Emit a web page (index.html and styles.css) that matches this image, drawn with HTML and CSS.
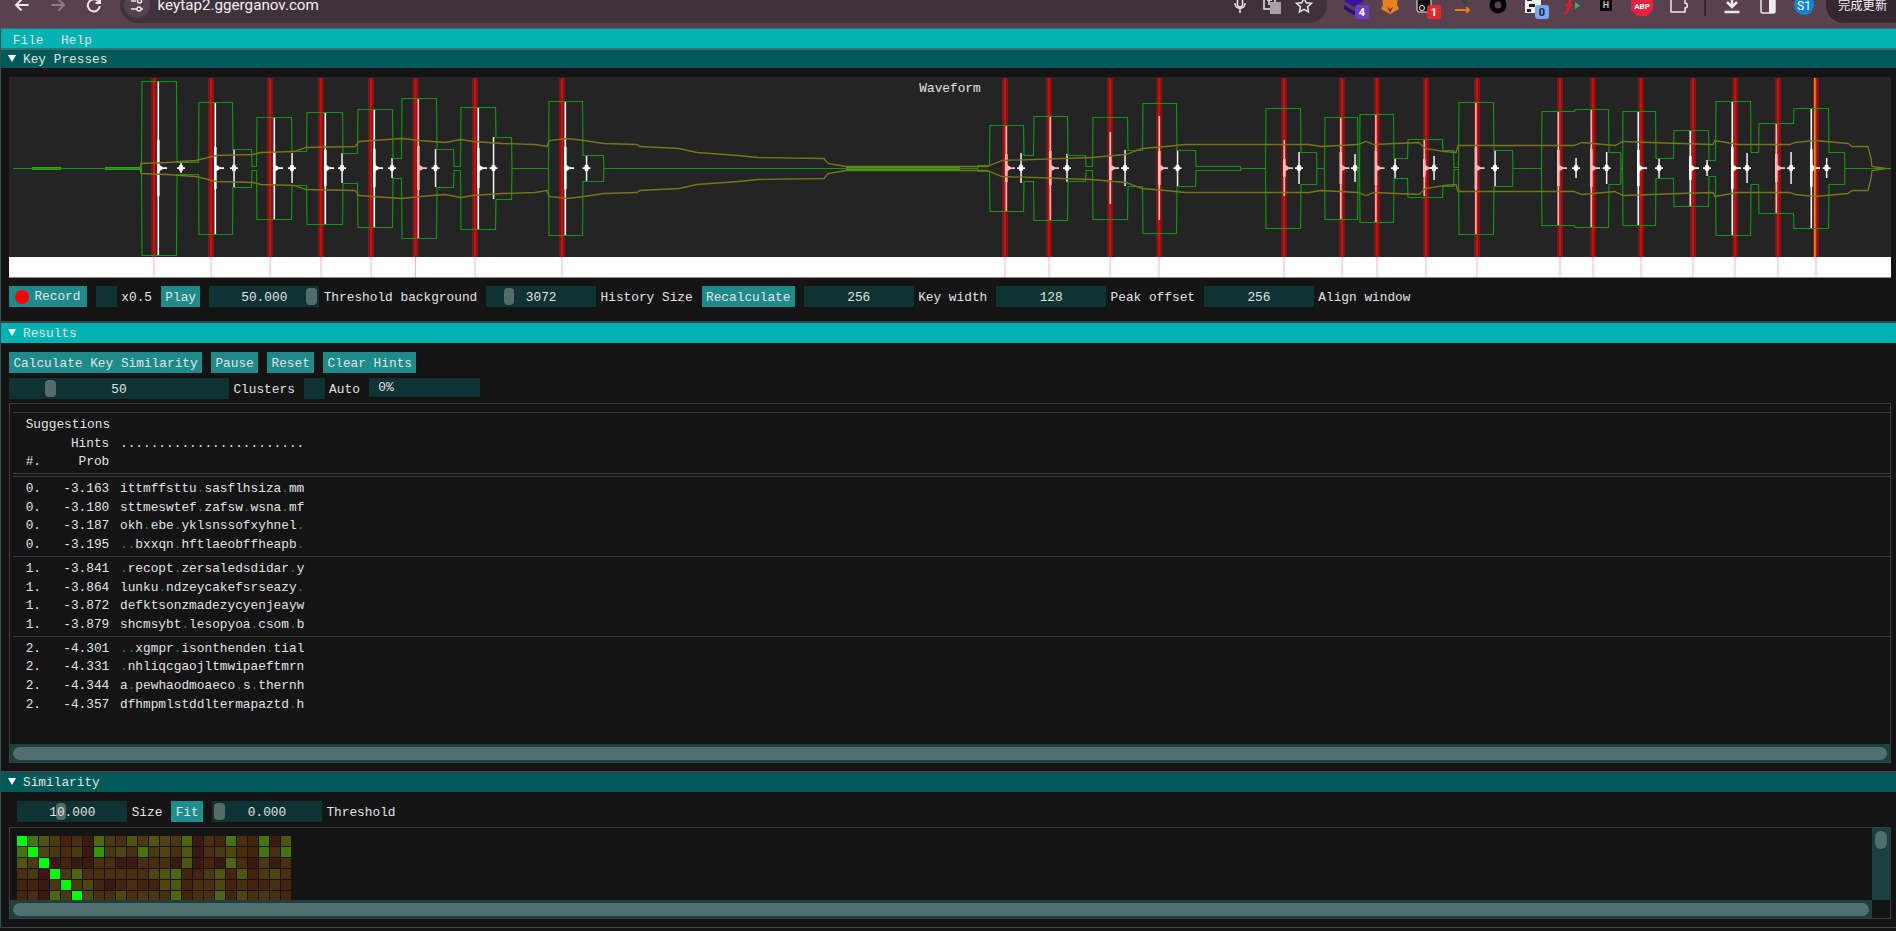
FILE: index.html
```html
<!DOCTYPE html>
<html>
<head>
  <title>keytap2</title>
  <link rel="stylesheet" href="styles.css">
</head>
<body>

  <!-- Browser toolbar -->
  <div class="toolbar">
    <div class="toolbar-row">
      <div class="slot first">
        <svg viewBox="0 0 36 36"><path d="M24.5 18H12M17.5 12.5L12 18l5.5 5.5" class="ic"/></svg>
      </div>
      <div class="slot">
        <svg viewBox="0 0 36 36"><path d="M11.5 18H24M18.5 12.5L24 18l-5.5 5.5" class="ic dim"/></svg>
      </div>
      <div class="slot">
        <svg viewBox="0 0 36 36"><path d="M22.8 15A6 6 0 1 0 23.8 19" class="ic"/><path d="M24 11.5V16h-4.5" class="ic"/></svg>
      </div>
      <div class="urlbar">
        <div class="site-icon">
          <svg viewBox="0 0 26 26"><path d="M7 9h5M7 17h6M17 17h2" class="ic thin"/><circle cx="15.5" cy="9" r="2" class="ic thin"/><circle cx="15" cy="17" r="2" class="ic thin"/></svg>
        </div>
        <span class="url">keytap2.ggerganov.com</span>
        <div class="spacer"></div>
        <div class="url-slot">
          <svg viewBox="0 0 32 36"><rect x="13.5" y="10" width="5" height="10" rx="2.5" class="ic thin"/><path d="M11 16c0 7 10 7 10 0M16 22v4" class="ic thin"/></svg>
        </div>
        <div class="url-slot">
          <svg viewBox="0 0 32 36"><rect x="8" y="10" width="11" height="12" class="ic thin"/><rect x="14" y="15" width="11" height="12" fill="#a9a0a6"/><path d="M11 13h5M13 13v5" class="ic thin"/></svg>
        </div>
        <div class="url-slot">
          <svg viewBox="0 0 32 36"><path d="M16 11l2.2 4.7 5.3.6-3.9 3.5 1 5.2-4.6-2.6-4.6 2.6 1-5.2-3.9-3.5 5.3-.6z" class="ic thin"/></svg>
        </div>
      </div>

      <!-- Extensions -->
      <div class="slot">
        <svg viewBox="0 0 36 36"><path d="M8 14l10-6 10 6-10 6z" fill="#3b10a3"/><path d="M8 18l10 6 10-6v4l-10 6-10-6z" fill="#2c0b80"/><rect x="19" y="18" width="14" height="14" rx="3" fill="#6a3fc5"/><text x="26" y="29" class="badge">4</text></svg>
      </div>
      <div class="slot">
        <svg viewBox="0 0 36 36"><path d="M10 9l5 4h6l5-4-1 9 2 4-9 5-9-5 2-4z" fill="#e8821e"/><path d="M15 20l3 2 3-2-3 6z" fill="#6e3a12"/></svg>
      </div>
      <div class="slot">
        <svg viewBox="0 0 36 36"><rect x="9" y="8" width="14" height="17" rx="2" fill="#111" stroke="#eee"/><circle cx="14" cy="21" r="2.5" fill="none" stroke="#eee"/><rect x="19" y="18" width="14" height="14" rx="3" fill="#e5282f"/><text x="26" y="29" class="badge">1</text></svg>
      </div>
      <div class="slot">
        <svg viewBox="0 0 36 36"><path d="M14 8l8 8v6" fill="none" stroke="#38434a" stroke-width="3"/><path d="M11 23h14M22 20l3 3-3 3" fill="none" stroke="#ee7d0e" stroke-width="2"/></svg>
      </div>
      <div class="slot">
        <svg viewBox="0 0 36 36"><circle cx="18" cy="18" r="6" fill="none" stroke="#000" stroke-width="5"/></svg>
      </div>
      <div class="slot">
        <svg viewBox="0 0 36 36"><rect x="9" y="7" width="16" height="19" fill="#eee"/><path d="M11 10h5v4h-5zM18 9h4v3h-4zM13 17h6v3h-6zM11 22h4v3h-4z" fill="#222"/><rect x="19" y="18" width="14" height="14" rx="3" fill="#7ba7ee"/><text x="26" y="29" class="badge dark">0</text></svg>
      </div>
      <div class="slot">
        <svg viewBox="0 0 36 36"><path d="M12 26c4 0 4-3 5-8s2-8 6-8M13 18h8" fill="none" stroke="#d2232a" stroke-width="2.6"/><path d="M23 15l5 3.5-5 3.5z" fill="#35b36a"/></svg>
      </div>
      <div class="slot">
        <svg viewBox="0 0 36 36"><rect x="12" y="11" width="12" height="13" rx="1" fill="#080808"/><text x="18" y="21" class="badge small">H</text></svg>
      </div>
      <div class="slot">
        <svg viewBox="0 0 36 36"><path d="M13 8h10l6 6v9l-6 6H13l-6-6v-9z" fill="#e6203f"/><text x="18" y="22" class="badge tiny">ABP</text></svg>
      </div>
      <div class="slot">
        <svg viewBox="0 0 36 36"><path d="M11 12h5c0-3 5-3 5 0h4v4c3 0 3 5 0 5v4H11z" class="ic thin"/></svg>
      </div>
      <div class="divider"></div>
      <div class="slot">
        <svg viewBox="0 0 36 36"><path d="M18 8v11M13 15l5 5 5-5M10.5 25h15" class="ic bold"/></svg>
      </div>
      <div class="slot">
        <svg viewBox="0 0 36 36"><rect x="11" y="10" width="14" height="16" rx="1.5" class="ic thin"/><rect x="19" y="10" width="6" height="16" fill="#eee"/></svg>
      </div>
      <div class="slot">
        <svg viewBox="0 0 36 36"><circle cx="18" cy="18" r="10" fill="#0e86d4"/><text x="18" y="22.5" class="badge avatar">S1</text></svg>
      </div>
      <div class="update">完成更新</div>
    </div>
  </div>

  <div class="app">
    <div class="menu">
      <span class="menu-item">File</span>
      <span class="menu-item">Help</span>
    </div>

    <!-- Key Presses -->
    <div class="header inactive"><span class="arrow"></span>Key Presses</div>
    <div class="panel keys">
      <div class="plot">
        <svg id="wave" class="wave" viewBox="9 77 1882 201" width="1882" height="201"></svg>
        <span class="plot-title">Waveform</span>
      </div>
      <div class="row controls">
        <div class="btn record"><span class="dot"></span>Record</div>
        <div class="field"><div class="check"></div><span>x0.5</span></div>
        <div class="btn">Play</div>
        <div class="field">
          <div class="slider"><span class="grab" style="left: 97px"></span><span class="val">50.000</span></div>
          <span>Threshold background</span>
        </div>
        <div class="field">
          <div class="slider"><span class="grab thin" style="left: 18px"></span><span class="val">3072</span></div>
          <span>History Size</span>
        </div>
        <div class="btn">Recalculate</div>
        <div class="field"><div class="slider"><span class="val">256</span></div><span>Key width</span></div>
        <div class="field"><div class="slider"><span class="val">128</span></div><span>Peak offset</span></div>
        <div class="field"><div class="slider"><span class="val">256</span></div><span>Align window</span></div>
      </div>
    </div>

    <!-- Results -->
    <div class="header active"><span class="arrow"></span>Results</div>
    <div class="panel results">
      <div class="row">
        <div class="btn">Calculate Key Similarity</div>
        <div class="btn">Pause</div>
        <div class="btn">Reset</div>
        <div class="btn">Clear Hints</div>
      </div>
      <div class="row second">
        <div class="field">
          <div class="slider wide"><span class="grab" style="left: 36px"></span><span class="val">50</span></div>
          <span>Clusters</span>
        </div>
        <div class="field"><div class="check"></div><span>Auto</span></div>
        <div class="progress">0%</div>
      </div>
      <div class="table-box">
        <div class="table-body" id="suggestions">
          <div class="rule first-rule"></div>
          <div class="head-row"><span>Suggestions</span></div>
          <div class="line"><span class="prob">Hints</span><span>........................</span></div>
          <div class="line"><span class="prob"><i>#.</i>Prob</span></div>
          <div class="rule double"></div>
        </div>
        <div class="hscroll"><span class="scroll-grab"></span></div>
      </div>
    </div>

    <!-- Similarity -->
    <div class="header inactive"><span class="arrow"></span>Similarity</div>
    <div class="panel similarity">
      <div class="row indent">
        <div class="field">
          <div class="slider"><span class="grab thin" style="left: 39px"></span><span class="val">10.000</span></div>
          <span>Size</span>
        </div>
        <div class="btn fit">Fit</div>
        <div class="field">
          <div class="slider"><span class="grab" style="left: 2px"></span><span class="val">0.000</span></div>
          <span>Threshold</span>
        </div>
      </div>
      <div class="heat-box">
        <div class="heat-view"><div class="heat" id="heat"></div></div>
        <div class="vscroll"><span class="vscroll-grab"></span></div>
        <div class="hscroll short"><span class="scroll-grab"></span></div>
        <div class="corner"></div>
      </div>
    </div>
  </div>

  <script src="script.js"></script>
</body>
</html>
```

FILE: styles.css
```css
html, body {
  margin: 0;
  height: 931px;
  overflow: hidden;
  background: #141414;
  font-family: "Liberation Mono", monospace;
  font-size: 12.8px;
  color: #e0e4e4;
}
svg {
  display: block;
}

/* browser toolbar */
.toolbar {
  height: 28px;
  background: #5a4150;
  overflow: hidden;
  font-family: Roboto, "Noto Sans CJK SC", sans-serif;
}
.toolbar-row {
  display: flex;
  align-items: center;
  height: 36px;
  margin-top: -13px;
}
.slot {
  width: 36px;
  height: 36px;
  flex: none;
}
.slot.first {
  margin-left: 4px;
}
.ic {
  fill: none;
  stroke: #eee6ea;
  stroke-width: 2;
}
.ic.dim {
  stroke: #8d7b87;
}
.ic.thin {
  stroke-width: 1.5;
}
.ic.bold {
  stroke-width: 2.5;
}
.badge {
  fill: #fff;
  font: bold 11px Roboto, sans-serif;
  text-anchor: middle;
}
.badge.dark {
  fill: #15233c;
}
.badge.small {
  fill: #bbb;
  font-size: 9px;
}
.badge.tiny {
  font-size: 8px;
}
.badge.avatar {
  font-weight: normal;
  font-size: 12px;
}
.urlbar {
  flex: none;
  width: 1207px;
  height: 36px;
  margin-left: 8px;
  margin-right: 8.5px;
  display: flex;
  align-items: center;
  background: #3f323c;
  border-radius: 18px;
  padding: 0 7px 0 4px;
  box-sizing: border-box;
}
.site-icon {
  width: 26px;
  height: 26px;
  border-radius: 50%;
  background: #54434f;
}
.url {
  margin-left: 7.5px;
  font-size: 15.2px;
  color: #f2eef0;
}
.spacer {
  flex: 1;
}
.url-slot {
  width: 32px;
  height: 36px;
}
.divider {
  width: 2px;
  height: 22px;
  margin: 0 8px;
  background: #33272f;
  flex: none;
}
.update {
  flex: 1;
  height: 36px;
  line-height: 38px;
  margin-left: 4.5px;
  padding-left: 12px;
  border-radius: 18px 0 0 18px;
  background: #332730;
  color: #f4f0f2;
  font-size: 12.3px;
}

/* imgui window */
.app {
  border-left: 1px solid #2e5050;
  border-top: 1px solid #3d6b6b;
}
.menu {
  display: flex;
  height: 19px;
  line-height: 23px;
  padding-left: 3px;
  background: #00b3b3;
  border-bottom: 2px solid #3a6e6e;
}
.menu-item {
  padding: 0 8.8px;
}
.header {
  display: flex;
  align-items: center;
  padding-left: 6.5px;
  box-sizing: border-box;
}
.header.inactive {
  background: #005a5a;
}
.header.active {
  background: #00b3b3;
}
.arrow {
  width: 0;
  height: 0;
  margin-right: 7.5px;
  margin-top: -2px;
  border-left: 4.5px solid transparent;
  border-right: 4.5px solid transparent;
  border-top: 7.5px solid #fff;
}
.panel {
  border-bottom: 2px solid #3c4545;
  box-sizing: border-box;
  padding-left: 8px;
}
.keys {
  height: 255px;
  padding-top: 9px;
}
.keys + .header {
  height: 20px;
}
.app > .header:nth-of-type(2) {
  height: 18px;
}
.results {
  height: 429.5px;
  padding-top: 9px;
}
.similarity {
  height: 136px;
  padding-top: 9px;
  border-bottom-width: 1px;
}
.results + .header {
  height: 19.5px;
}

/* waveform */
.plot {
  position: relative;
  width: 1882px;
  height: 201px;
}
.plot-title {
  position: absolute;
  top: 4px;
  left: 0;
  right: 0;
  text-align: center;
}

/* widgets */
.row {
  display: flex;
  gap: 8.9px;
  height: 21px;
  line-height: 23px;
  white-space: pre;
}
.controls {
  margin-top: 8px;
}
.second {
  margin-top: 5px;
}
.indent {
  margin-left: 8.3px;
}
.field {
  display: flex;
  gap: 4.4px;
}
.btn {
  padding: 0 4.4px;
  background: #1f8a8a;
  flex: none;
}
.btn.fit {
  background: #1b8f8f;
}
.record {
  display: flex;
  align-items: center;
  width: 78px;
  box-sizing: border-box;
}
.dot {
  width: 14px;
  height: 14px;
  margin: 0 5px 0 2px;
  border-radius: 50%;
  background: #ff0000;
}
.check {
  width: 21px;
  height: 21px;
  background: #0f3232;
}
.slider {
  position: relative;
  width: 110px;
  height: 21px;
  background: #0f3232;
  text-align: center;
}
.slider.wide {
  width: 220px;
}
.grab {
  position: absolute;
  top: 2px;
  width: 11px;
  height: 17px;
  border-radius: 4px;
  background: #566c6c;
}
.grab.thin {
  width: 10px;
}
.val {
  position: relative;
}
.progress {
  width: 111px;
  height: 19px;
  line-height: 20px;
  padding-left: 9.5px;
  box-sizing: border-box;
  background: #0f3232;
}

/* suggestions table */
.table-box {
  width: 1882px;
  height: 360px;
  margin-top: 4px;
  display: flex;
  flex-direction: column;
  box-sizing: border-box;
  border: 1px solid #3a3d3d;
}
.table-body {
  flex: 1;
  padding: 8px 0 0 3px;
}
.rule {
  height: 1px;
  background: #3a3d3d;
}
.first-rule {
  margin-bottom: 3px;
}
.rule.double {
  height: 1px;
  margin: 1px 0 6px;
  box-shadow: 0 3px 0 #3a3d3d;
}
.rule.group {
  margin: 1px 0 3px;
}
.head-row, .line {
  display: flex;
  height: 18.7px;
  line-height: 18.7px;
  padding-left: 12.7px;
  white-space: pre;
}
.prob {
  display: flex;
  justify-content: flex-end;
  width: 83.6px;
  margin-right: 10.7px;
  flex: none;
}
.prob i {
  font-style: normal;
  margin-right: auto;
}
.sp {
  color: #1d8f1d;
}
.hscroll {
  height: 18px;
  flex: none;
  padding: 3px 3px 2px 3px;
  box-sizing: border-box;
  background: #1a4040;
}
.scroll-grab {
  display: block;
  height: 13px;
  border-radius: 7px;
  background: #526e6e;
}

/* similarity heat map */
.heat-box {
  display: grid;
  grid-template-columns: 1fr 18px;
  grid-template-rows: 72px 18px;
  width: 1882px;
  height: 92px;
  margin-top: 5px;
  box-sizing: border-box;
  border: 1px solid #3a3d3d;
}
.heat-view {
  overflow: hidden;
  padding: 7.5px 0 0 7.3px;
  box-sizing: border-box;
}
.heat {
  display: grid;
  grid-template-columns: repeat(25, 10px);
  grid-auto-rows: 10px;
  gap: 1px;
}
.lv0 { background: #3a1a10; }
.lv1 { background: #45240f; }
.lv2 { background: #4a2e10; }
.lv3 { background: #4a3810; }
.lv4 { background: #4f4510; }
.lv5 { background: #4f5510; }
.lv6 { background: #4f6510; }
.lv7 { background: #45750c; }
.lv8 { background: #35950a; }
.lv9 { background: #00ff00; }
.vscroll {
  padding: 3px;
  box-sizing: border-box;
  background: #1a4040;
}
.vscroll-grab {
  display: block;
  height: 18px;
  border-radius: 6px;
  background: #526e6e;
}
.corner {
  background: #141414;
}
```

FILE: script.js
```js
const cy = 168;
const svgNs = 'http://www.w3.org/2000/svg';
const wave = document.getElementById('wave');

// red x, spike x, spike half height, release x, release half height
const keys = [
  [154, 158, 87, 181, 5], [211, 215, 66, 234, 19], [270, 274, 51, 292, 15], [321, 325, 56, 342, 15],
  [371, 374, 59, 392, 10], [415.5, 418, 70, 435.5, 19], [475, 478, 61, 493.5, 31], [562, 565, 67, 586.5, 13],
  [1005, 1006, 43, 1021, 15], [1049, 1050, 52, 1067, 14], [1110, 1110, 36, 1125, 18], [1159, 1159, 52, 1177.5, 18],
  [1284, 1284, 28, 1299, 16], [1342, 1340.5, 51, 1355, 14], [1377, 1375.6, 54, 1395, 10], [1426, 1424, 28, 1434, 12],
  [1477, 1475.6, 66, 1495, 18], [1560, 1558, 57, 1576, 10], [1593, 1591, 59, 1606.6, 16], [1641, 1638, 57, 1659, 10],
  [1693, 1690, 38, 1707, 8], [1735, 1732, 67, 1747, 15], [1778, 1776, 45, 1791, 16], [1816, 1811, 60, 1826.6, 10]
];

// step outline of each key window: x, half height from there on
const greenSteps = [
  [13, 0], [141, 87], [176, 6], [198, 66], [232, 19], [251, 2], [256, 51], [291, 17], [306, 56], [342, 15],
  [357, 59], [392, 10], [401, 70], [436, 19], [453, 2], [460, 61], [495, 31], [511, 0], [548, 67], [582, 13],
  [603, 0], [977, 3], [989, 43], [1023, 13], [1033, 52], [1067, 13], [1085, 2], [1092, 51], [1127, 18],
  [1142, 65], [1176, 18], [1195, 2], [1240, 0], [1265, 60], [1300, 16], [1316, 0], [1324, 51], [1357, 0],
  [1359, 54], [1393, 10], [1407, 29], [1442, 18], [1453, 1], [1458, 66], [1493, 18], [1512, 0], [1541, 57],
  [1574, 59], [1608, 16], [1620, 0], [1622, 57], [1655, 10], [1673, 38], [1708, 8], [1715, 67], [1750, 16],
  [1758, 45], [1793, 60], [1828, 16], [1844, 0], [1886, 0]
];

// slower envelope
const olive = [
  [140, 0], [141, 5], [167, 6], [196, 8], [216, 13], [253, 14], [261, 16], [294, 17], [306, 21], [355, 22],
  [359, 27], [402, 30], [420, 28], [445, 26], [461, 29], [473, 27], [502, 25], [535, 24], [547, 22], [549, 28],
  [567, 30], [584, 28], [604, 25], [637, 24], [640, 22], [679, 20], [697, 16], [738, 13], [758, 11], [824, 10],
  [828, 5], [846, 2], [987, 2], [1002, 8], [1091, 11], [1126, 14], [1142, 20], [1166, 22], [1185, 24], [1309, 24],
  [1321, 22], [1358, 24], [1366, 27], [1374, 24], [1419, 26], [1425, 20], [1444, 17], [1456, 16], [1458, 23],
  [1574, 23], [1582, 26], [1615, 23], [1623, 27], [1680, 25], [1713, 24], [1715, 28], [1738, 24], [1790, 24],
  [1795, 26], [1815, 28], [1848, 25], [1852, 22], [1868, 22], [1871, 10], [1872, 2], [1886, 0]
];

function add(tag, attrs) {
  const el = document.createElementNS(svgNs, tag);
  for (let k in attrs) el.setAttribute(k, attrs[k]);
  wave.appendChild(el);
  return el;
}

function bar(x, y, w, h, fill) {
  add('rect', { x: x, y: y, width: w, height: h, fill: fill });
}

function stepPath(sign) {
  let d = 'M' + greenSteps[0][0] + ' ' + (cy + 0.5);
  let prev = 0;
  greenSteps.forEach(s => {
    d += 'L' + (s[0] + 0.5) + ' ' + (cy + 0.5 + sign * prev) + 'L' + (s[0] + 1) + ' ' + (cy + 0.5 + sign * s[1]);
    prev = s[1];
  });
  return d;
}

function linePath(sign) {
  return 'M' + olive.map(p => p[0] + ' ' + (cy + 0.5 + sign * p[1])).join('L');
}

bar(9, 77, 1882, 180, '#242424');
bar(9, 257, 1882, 20, '#ffffff');
bar(9, 277, 1882, 1, '#8a8a8a');

// key markers
keys.forEach(k => {
  bar(k[0] - 3, 78, 6, 179, '#7e1616');
  bar(k[0] - 1, 78, 2, 179, '#c81010');
  bar(k[0] - 0.5, 257, 1, 20, '#ffb4b4');
});

// spikes
keys.forEach(k => {
  const onRed = Math.abs(k[1] - k[0]) < 3;
  const c = onRed ? '#ffb8b8' : '#ffffff';
  const body = Math.round(k[2] * 0.32);
  bar(k[1] - 0.5, cy - k[2], 1.6, k[2] * 2, c);
  bar(k[1] - 1, cy - body, 2.6, body * 2, c);
  add('path', { d: 'M' + k[1] + ' ' + (cy - 4) + 'L' + (k[1] + 5) + ' ' + (cy - 0.7) + 'L' + (k[1] + 9) + ' ' + (cy - 0.7) + 'V' + (cy + 1) + 'H' + (k[1] + 5) + 'L' + k[1] + ' ' + (cy + 4) + 'Z', fill: c });
  bar(k[3] - 0.7, cy - k[4], 1.5, k[4] * 2, '#f4f4f4');
  bar(k[3] - 4, cy - 0.7, 8, 1.7, '#ffffff');
  add('ellipse', { cx: k[3], cy: cy, rx: 2.2, ry: 3.4, fill: '#ffffff' });
});

// orange cursor on the newest key
bar(1814, 78, 1.6, 179, '#ff9000');

// green noise floor
[[32, 61], [105, 140], [846, 960]].forEach(r => bar(r[0], cy - 1, r[1] - r[0], 3, '#3da312'));
bar(1860, cy, 32, 1, '#22b022');

[-1, 1].forEach(sign => {
  add('path', { d: stepPath(sign), fill: 'none', stroke: '#119411', 'stroke-width': 1.2 });
  add('path', { d: linePath(sign), fill: 'none', stroke: '#77771a', 'stroke-width': 1.3 });
});

// suggestions
const groups = [
  [0, [[-3.163, 'ittmffsttu.sasflhsiza.mm'], [-3.180, 'sttmeswtef.zafsw.wsna.mf'], [-3.187, 'okh.ebe.yklsnssofxyhnel.'], [-3.195, '..bxxqn.hftlaeobffheapb.']]],
  [1, [[-3.841, '.recopt.zersaledsdidar.y'], [-3.864, 'lunku.ndzeycakefsrseazy.'], [-3.872, 'defktsonzmadezycyenjeayw'], [-3.879, 'shcmsybt.lesopyoa.csom.b']]],
  [2, [[-4.301, '..xgmpr.isonthenden.tial'], [-4.331, '.nhliqcgaojltmwipaeftmrn'], [-4.344, 'a.pewhaodmoaeco.s.thernh'], [-4.357, 'dfhmpmlstddltermapaztd.h']]]
];
const list = document.getElementById('suggestions');
let html = '';
groups.forEach((g, i) => {
  if (i > 0) html += '<div class="rule group"></div>';
  g[1].forEach(r => {
    const text = r[1].replace(/\./g, '<span class="sp">.</span>');
    html += '<div class="line"><span class="prob"><i>' + g[0] + '.</i>' + r[0].toFixed(3) + '</span><span>' + text + '</span></div>';
  });
});
list.insertAdjacentHTML('beforeend', html);

// similarity levels, one digit per cell
const heatRows = [
  '9753120632535436021721705',
  '7943230834273425023421727',
  '5390100220022205010620302',
  '2309362222224561135151342',
  '1103934101211451224121121',
  '1206394224233261226142321'
];
const heat = document.getElementById('heat');
heatRows.forEach(row => {
  row.split('').forEach(v => {
    const cell = document.createElement('div');
    cell.className = 'lv' + v;
    heat.appendChild(cell);
  });
});
```
